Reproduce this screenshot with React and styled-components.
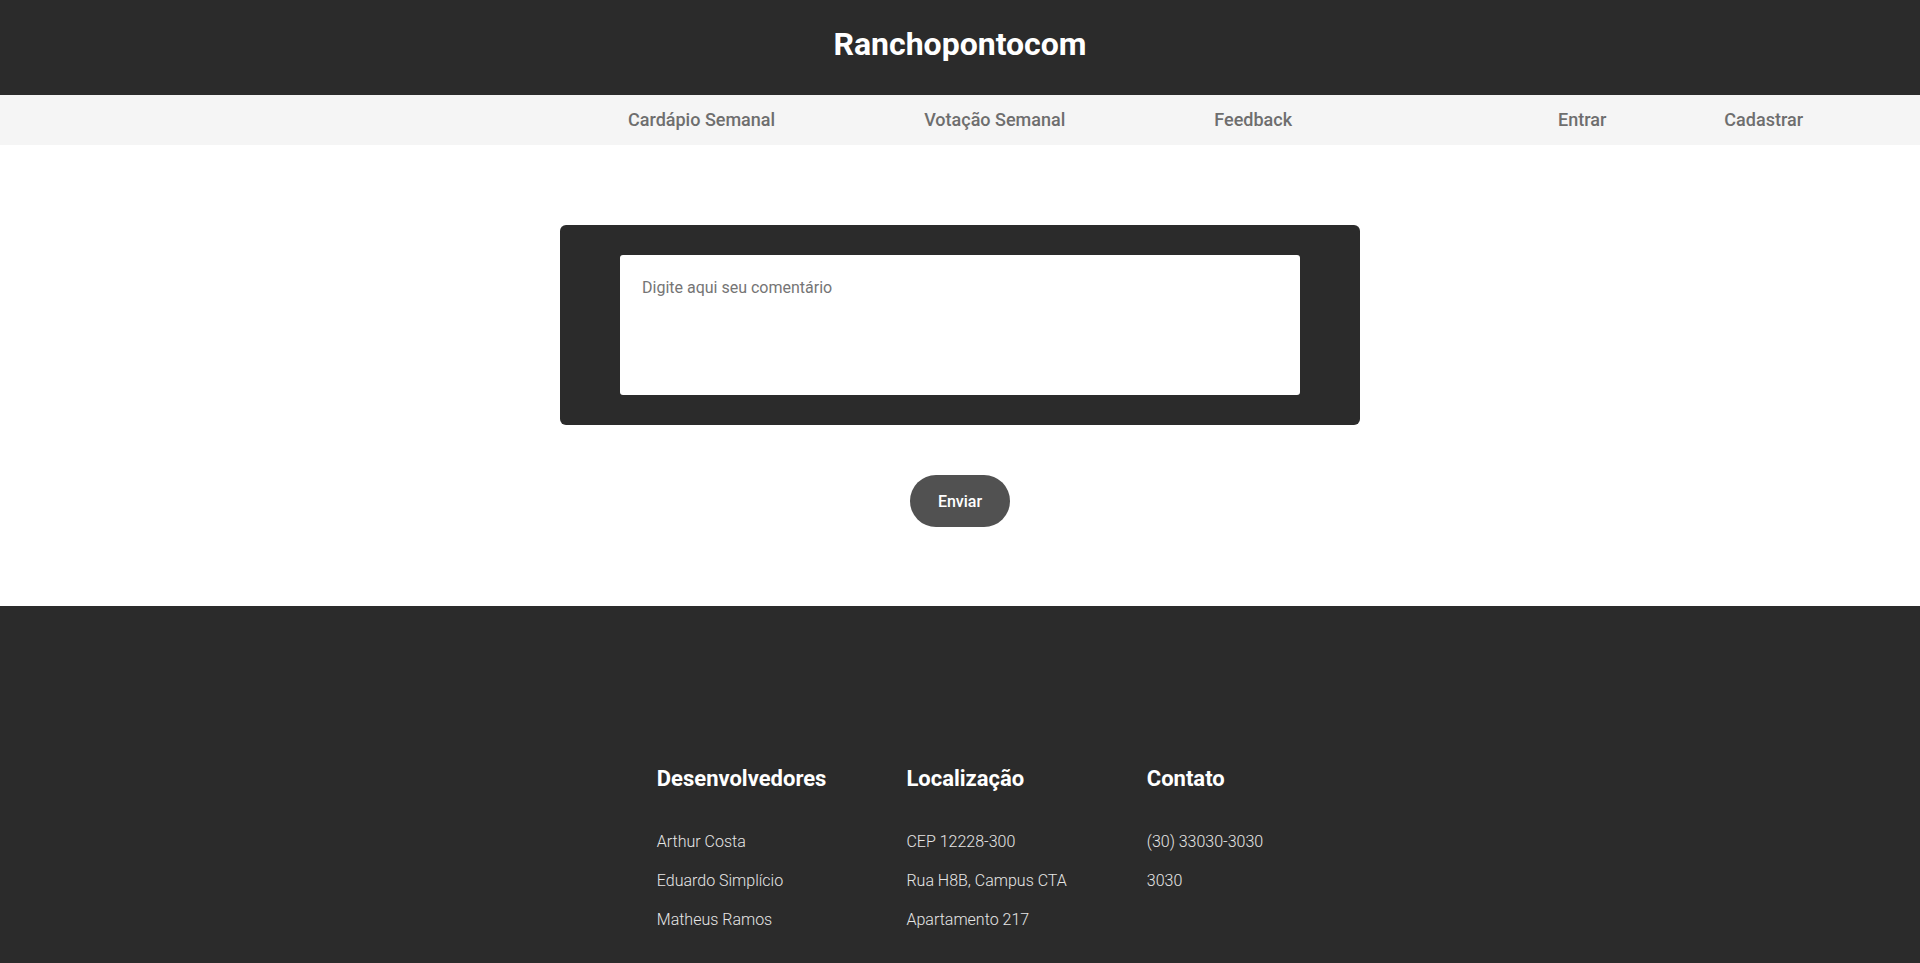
import styled, { createGlobalStyle } from "styled-components";

const GlobalStyle = createGlobalStyle`
    body {
        margin: 0;
        font-family: Roboto, "Liberation Sans", sans-serif;
        background: #ffffff;
    }
    * { box-sizing: border-box; }
`;

export default function App(){
    return (<>
        <GlobalStyle />
        <Header>
            <Logo>Ranchopontocom</Logo>
        </Header>
        <Nav>
            <NavGroup>
                <NavLink>Cardápio Semanal</NavLink>
                <NavLink>Votação Semanal</NavLink>
                <NavLink>Feedback</NavLink>
            </NavGroup>
            <AuthGroup>
                <NavLink>Entrar</NavLink>
                <NavLink>Cadastrar</NavLink>
            </AuthGroup>
        </Nav>
        <Main>
            <Card>
                <TextArea placeholder="Digite aqui seu comentário" />
            </Card>
            <Button>Enviar</Button>
        </Main>
        <Footer>
            <Column>
                <h2>Desenvolvedores</h2>
                <p>Arthur Costa</p>
                <p>Eduardo Simplício</p>
                <p>Matheus Ramos</p>
            </Column>
            <Column>
                <h2>Localização</h2>
                <p>CEP 12228-300</p>
                <p>Rua H8B, Campus CTA</p>
                <p>Apartamento 217</p>
            </Column>
            <Column>
                <h2>Contato</h2>
                <p>(30) 33030-3030</p>
                <p>3030</p>
            </Column>
        </Footer>
    </>);
};

const Header = styled.header`
    height: 95px;
    padding-bottom: 8px;
    background-color: #2b2b2b;
    display: flex;
    align-items: center;
    justify-content: center;
`;
const Logo = styled.h1`
    margin: 0;
    font-size: 32px;
    font-weight: 700;
    color: #ffffff;
`;
const Nav = styled.nav`
    height: 50px;
    padding-bottom: 2px;
    background-color: #f5f5f5;
    display: flex;
    align-items: center;
    padding-left: 628px;
`;
const NavGroup = styled.div`
    display: flex;
    gap: 149px;
`;
const AuthGroup = styled.div`
    display: flex;
    gap: 118px;
    margin-left: 266px;
`;
const NavLink = styled.a`
    font-size: 18px;
    font-weight: 500;
    color: #6e6e6e;
    cursor: pointer;
`;
const Main = styled.main`
    display: flex;
    flex-direction: column;
    align-items: center;
    padding: 80px 0 79px;
`;
const Card = styled.div`
    width: 800px;
    padding: 30px 60px;
    background-color: #2b2b2b;
    border-radius: 6px;
`;
const TextArea = styled.textarea`
    display: block;
    width: 100%;
    height: 140px;
    border: none;
    border-radius: 3px;
    outline: none;
    resize: none;
    padding: 23px 22px 22px;
    font-family: Roboto, "Liberation Sans", sans-serif;
    font-size: 16px;
    color: #333;
    &::placeholder { color: #757575; }
`;
const Button = styled.button`
    margin-top: 50px;
    width: 100px;
    height: 52px;
    border: none;
    border-radius: 26px;
    background-color: #515151;
    color: #ffffff;
    font-family: Roboto, "Liberation Sans", sans-serif;
    font-size: 16px;
    font-weight: 500;
    cursor: pointer;
`;
const Footer = styled.footer`
    background-color: #2b2b2b;
    display: flex;
    justify-content: center;
    gap: 80px;
    padding: 160px 0 60px;
`;
const Column = styled.div`
    display: flex;
    flex-direction: column;
    h2 {
        margin: 0 0 41px;
        font-size: 22px;
        font-weight: 700;
        color: #ffffff;
    }
    p {
        margin: 0 0 20px;
        font-size: 16px;
        font-weight: 300;
        color: #e6e6e6;
    }
`;
